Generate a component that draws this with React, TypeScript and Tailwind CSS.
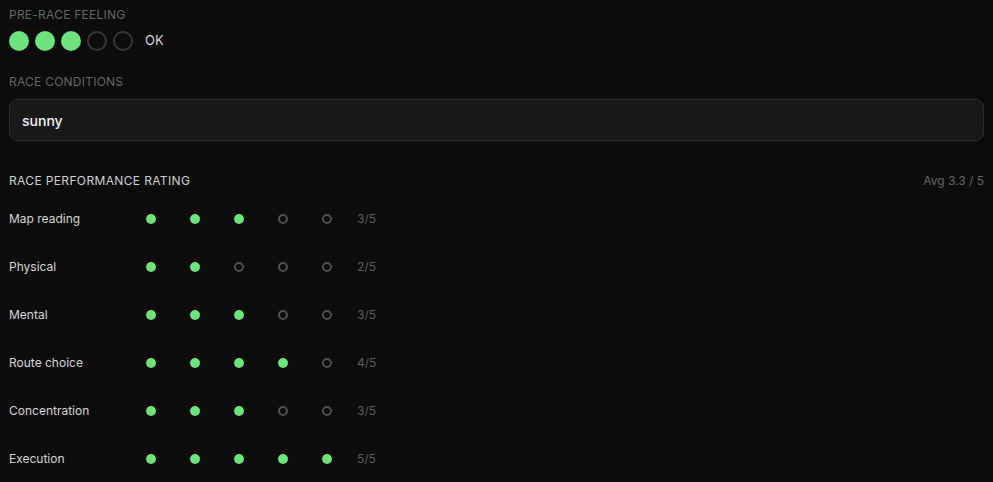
import React from 'react';

const ratings = [
  { label: 'Map reading', value: 3 },
  { label: 'Physical', value: 2 },
  { label: 'Mental', value: 3 },
  { label: 'Route choice', value: 4 },
  { label: 'Concentration', value: 3 },
  { label: 'Execution', value: 5 },
];

const App: React.FC = () => {
  const feeling = 3;
  return (
    <div className="min-h-screen bg-[#0c0c0c] px-[9px] pt-[7px] font-['Inter',sans-serif] text-[#d4d4d4]">
      {/* Pre-race feeling */}
      <div className="text-[12px] leading-4 uppercase tracking-[0.02em] text-[#666666]">Pre-race feeling</div>
      <div className="mt-2 flex items-center h-5">
        <div className="flex gap-[6px]">
          {[1, 2, 3, 4, 5].map((i) => (
            <button
              key={i}
              className={
                i <= feeling
                  ? 'w-5 h-5 rounded-full bg-[#6ee27c]'
                  : 'w-5 h-5 rounded-full border-2 border-[#383838]'
              }
            />
          ))}
        </div>
        <span className="ml-3 text-[13px] text-[#d4d4d4]">OK</span>
      </div>

      {/* Race conditions */}
      <div className="mt-[23px] text-[12px] leading-4 uppercase tracking-[0.02em] text-[#666666]">Race conditions</div>
      <div className="mt-[9px] h-[42px] rounded-lg border border-[#2c2c2c] bg-[#181818] px-[12px] flex items-center text-[14px] font-medium text-[#f2f2f2]">
        sunny
      </div>

      {/* Performance rating */}
      <div className="mt-[32px] flex items-center justify-between">
        <span className="text-[12px] leading-4 uppercase tracking-[0.03em] text-[#cfcfcf]">Race performance rating</span>
        <span className="text-[12px] leading-4 text-[#666666]">Avg 3.3 / 5</span>
      </div>
      <div className="mt-[14px] flex flex-col gap-4">
        {ratings.map((r) => (
          <div key={r.label} className="flex items-center h-8">
            <span className="w-[120px] text-[12px] text-[#d4d4d4]">{r.label}</span>
            <div className="flex">
              {[1, 2, 3, 4, 5].map((i) => (
                <button key={i} className="w-11 h-8 flex items-center justify-center">
                  <span
                    className={
                      i <= r.value
                        ? 'block w-[10px] h-[10px] rounded-full bg-[#6ee27c]'
                        : 'block w-[10px] h-[10px] rounded-full border-2 border-[#505050]'
                    }
                  />
                </button>
              ))}
            </div>
            <span className="ml-2 text-[12px] text-[#5e5e5e]">{r.value}/5</span>
          </div>
        ))}
      </div>
    </div>
  );
};

export default App;
